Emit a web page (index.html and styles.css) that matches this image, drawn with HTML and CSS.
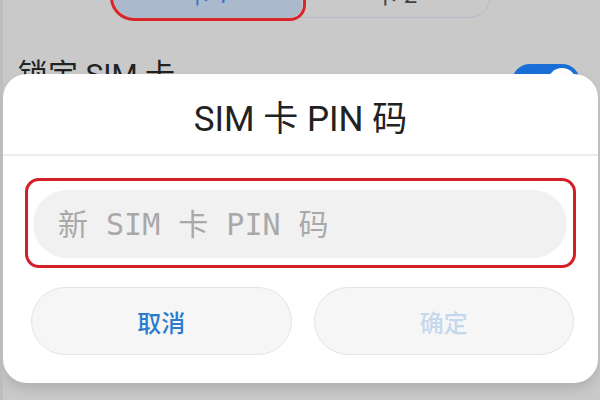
FILE: index.html
```html
<!DOCTYPE html>
<html lang="zh-CN">
<head>
  <meta charset="UTF-8">
  <meta name="viewport" content="width=device-width, initial-scale=1.0">
  <title>SIM 卡 PIN 码</title>
  <link rel="stylesheet" href="styles.css">
</head>
<body>
  <div class="screen">
    <div class="tabs">
      <div class="tab active">卡 1</div>
      <div class="tab">卡 2</div>
    </div>

    <div class="row">
      <span class="row-label">锁定 SIM 卡</span>
      <span class="switch"><span class="knob"></span></span>
    </div>

    <!-- PIN dialog -->
    <div class="dialog">
      <div class="dialog-title">SIM 卡 PIN 码</div>
      <div class="dialog-body">
        <div class="field-mark">
          <input class="field" type="password" placeholder="新 SIM 卡 PIN 码">
        </div>
        <div class="actions">
          <button class="btn">取消</button>
          <button class="btn disabled">确定</button>
        </div>
      </div>
    </div>
  </div>
</body>
</html>
```

FILE: styles.css
```css
body {
  margin: 0;
  padding: 0;
  background-color: #c9c9c9;
  font-family: Roboto, "Noto Sans CJK SC", sans-serif;
}

.screen {
  position: relative;
  width: 600px;
  height: 400px;
  overflow: hidden;
  border-left: 3px solid #bdbdbd;
  box-sizing: border-box;
}

.tabs {
  display: flex;
  width: 378px;
  height: 50px;
  margin: -32px auto 0;
  border: 1px solid #b3bcc8;
  border-radius: 22px;
  box-sizing: border-box;
}

.tab {
  flex: 1;
  display: flex;
  align-items: flex-end;
  justify-content: center;
  padding-bottom: 10px;
  font-size: 24px;
  line-height: 24px;
  color: #444;
}

.tab.active {
  background-color: #aab9cb;
  color: #3a78c0;
  border-radius: 20px 12px 12px 20px;
  outline: 3px solid #d8262b;
  outline-offset: 1px;
}

.row {
  display: flex;
  justify-content: space-between;
  align-items: flex-start;
  padding: 32px 20px 0 15px;
}

.row-label {
  font-size: 30px;
  color: #222;
}

.switch {
  position: relative;
  width: 68px;
  height: 36px;
  margin-top: 14px;
  background-color: #1a6fd6;
  border-radius: 18px;
}

.knob {
  position: absolute;
  right: 4px;
  top: 4px;
  width: 28px;
  height: 28px;
  border-radius: 50%;
  background: #fff;
}

.dialog {
  position: absolute;
  left: 0;
  top: 74px;
  width: 595px;
  height: 309px;
  background: #fff;
  border-radius: 24px;
  box-shadow: 0 6px 12px rgba(0, 0, 0, 0.12);
}

.dialog-title {
  height: 82px;
  display: flex;
  align-items: center;
  justify-content: center;
  padding-top: 2px;
  box-sizing: border-box;
  font-size: 35px;
  color: #222;
  border-bottom: 2px solid #ececec;
}

.dialog-body {
  padding: 22px 22px 0 22px;
}

.field-mark {
  height: 90px;
  border: 3px solid #d51f26;
  border-radius: 14px;
  padding: 9px 6px 7px 5px;
  box-sizing: border-box;
}

.field {
  width: 100%;
  height: 100%;
  box-sizing: border-box;
  border: none;
  border-radius: 34px;
  background: #f1f1f1;
  padding: 0 0 0 25px;
  font-family: "DejaVu Sans Mono", "Noto Sans CJK SC", monospace;
  font-size: 30px;
  outline: none;
}

.field::placeholder {
  color: #a9a9a9;
}

.actions {
  display: flex;
  gap: 22px;
  padding: 19px 2px 0 6px;
}

.btn {
  flex: 1;
  height: 68px;
  border: 1px solid #e4e4e4;
  border-radius: 34px;
  background: #f6f6f6;
  font-family: Roboto, "Noto Sans CJK SC", sans-serif;
  font-size: 24px;
  font-weight: 500;
  color: #2b7bd0;
}

.btn.disabled {
  color: #c6d8ee;
}
```
